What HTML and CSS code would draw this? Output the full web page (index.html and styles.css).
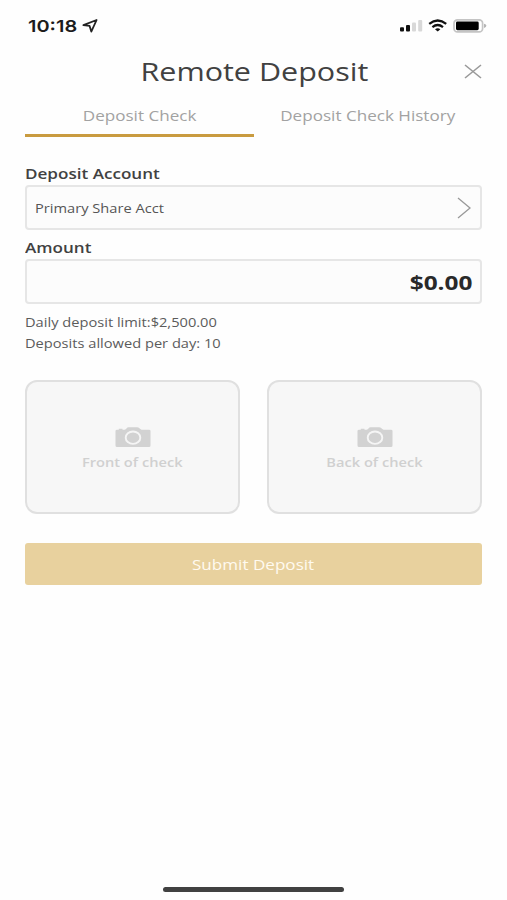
FILE: index.html
```html
<!DOCTYPE html>
<html lang="en">
<head>
<meta charset="utf-8">
<title>Remote Deposit</title>
<link rel="stylesheet" href="styles.css">
</head>
<body>
<div class="screen">
  <header class="status">
    <div class="clock"><span class="wide start time">10:18</span>
      <svg class="locate" width="16" height="14" viewBox="0 0 16 14"><path d="M14.6 1 1.4 6.1 7.6 6.9 9.3 12.6Z" fill="none" stroke="#222" stroke-width="1.8" stroke-linejoin="round"/></svg>
    </div>
    <svg class="indicators" width="88" height="14" viewBox="0 0 88 14">
      <rect x="1" y="8.2" width="4" height="4.4" rx="1" fill="#111"/>
      <rect x="7" y="6" width="4" height="6.6" rx="1" fill="#111"/>
      <rect x="13" y="3.4" width="4" height="9.2" rx="1" fill="#d8d8d8"/>
      <rect x="19.2" y="1" width="4" height="11.6" rx="1" fill="#d8d8d8"/>
      <g fill="none" stroke="#111" stroke-width="2.2">
        <path d="M30.2 4.9Q38.7-1.9 47.2 4.9"/>
        <path d="M33.4 8.1Q38.7 3.9 44 8.1"/>
      </g>
      <path d="M36 10.2Q38.7 8.2 41.4 10.2L38.7 12.6Z" fill="#111"/>
      <rect x="55" y=".9" width="28.6" height="12" rx="3.4" fill="#fff" stroke="#c4c4c4" stroke-width="1.7"/>
      <rect x="57" y="2.6" width="22.7" height="8.6" rx="1.4" fill="#000"/>
      <path d="M85 4.7Q87.4 5.4 87.4 6.8T85 8.9Z" fill="#b5b5b5"/>
    </svg>
  </header>

  <div class="titlebar">
    <h1><span class="wide title">Remote Deposit</span></h1>
    <button class="close" aria-label="Close"><svg width="18" height="15" viewBox="0 0 18 15"><path d="M1 1 17 14M17 1 1 14" stroke="#999" stroke-width="1.6" fill="none"/></svg></button>
  </div>

  <nav class="tabs">
    <a class="tab active"><span class="wide">Deposit Check</span></a>
    <a class="tab"><span class="wide">Deposit Check History</span></a>
  </nav>

  <main>
    <div class="label"><span class="wide start">Deposit Account</span></div>
    <div class="field account"><span class="wide start">Primary Share Acct</span>
      <svg width="14" height="22" viewBox="0 0 14 22"><path d="M1 1 13 11 1 21" fill="none" stroke="#999" stroke-width="1.3"/></svg>
    </div>
    <div class="label second"><span class="wide start">Amount</span></div>
    <div class="field amount"><span class="wide end">$0.00</span></div>
    <div class="limits">
      <p><span class="wide start">Daily deposit limit:$2,500.00</span></p>
      <p><span class="wide start">Deposits allowed per day: 10</span></p>
    </div>
    <div class="photos">
      <div class="photo">
        <svg width="36" height="21" viewBox="0 0 36 21"><path d="M2 2.7H3.8V1.7H7.5V2.7H9.5Q11 2.5 11.7 1.3T14 .3H22Q23.6.3 24.4 1.3T26.5 2.7H34Q35.5 2.7 35.5 4V18.5Q35.5 20 34 20H2Q.5 20 .5 18.5V4Q.5 2.7 2 2.7Z" fill="#d2d2d2"/><ellipse cx="18" cy="10.7" rx="7.3" ry="6.2" fill="#d2d2d2" stroke="#f5f5f5" stroke-width="1.9"/></svg>
        <span class="wide">Front of check</span>
      </div>
      <div class="photo">
        <svg width="36" height="21" viewBox="0 0 36 21"><path d="M2 2.7H3.8V1.7H7.5V2.7H9.5Q11 2.5 11.7 1.3T14 .3H22Q23.6.3 24.4 1.3T26.5 2.7H34Q35.5 2.7 35.5 4V18.5Q35.5 20 34 20H2Q.5 20 .5 18.5V4Q.5 2.7 2 2.7Z" fill="#d2d2d2"/><ellipse cx="18" cy="10.7" rx="7.3" ry="6.2" fill="#d2d2d2" stroke="#f5f5f5" stroke-width="1.9"/></svg>
        <span class="wide">Back of check</span>
      </div>
    </div>
    <button class="submit"><span class="wide">Submit Deposit</span></button>
  </main>
  <div class="home"></div>
</div>
</body>
</html>
```
FILE: styles.css
```css
* { box-sizing: border-box; margin: 0; padding: 0; }
body { background: #fefefe; font-family: "Open Sans", "Noto Sans", sans-serif; color: #414141; }
button { border: 0; background: none; font: inherit; color: inherit; }
svg { display: block; flex: none; }
.screen { width: 507px; height: 900px; display: flex; flex-direction: column; overflow: hidden; }
.wide { display: inline-block; white-space: nowrap; transform: scaleX(1.22); }
.start { transform-origin: left center; }
.end { transform-origin: right center; }

.status { height: 51px; padding: 0 20px 0 28px; display: flex; align-items: center; justify-content: space-between; }
.clock { display: flex; align-items: center; color: #1c1c1c; font: 600 16.5px/20px Inter, sans-serif; }
.time { width: 54px; transform: scaleX(1.21); }

.titlebar { height: 40px; padding: 0 25px; display: grid; grid-template-columns: 18px 1fr 18px; align-items: center; }
h1 { grid-column: 2; text-align: center; font-size: 25px; line-height: 34px; font-weight: 400; }
.title { margin-left: 1px; }
.close { grid-column: 3; width: 18px; height: 15px; }

.tabs { height: 46px; margin: 0 25px; display: grid; grid-template-columns: 1fr 1fr; }
.tab { text-align: center; color: #a2a2a2; font-size: 14px; line-height: 20px; padding-top: 15px; border-bottom: 3px solid transparent; }
.tab.active { border-bottom-color: #c99b40; }

main { padding: 27px 25px 0; }
.label { height: 21px; line-height: 20px; font-size: 14px; font-weight: 600; }
.second { margin-top: 8px; }
.field { height: 45px; border: 2px solid #e6e6e6; border-radius: 4px; background: #fcfcfc; display: flex; align-items: center; justify-content: space-between; padding: 0 9px 0 8px; }
.account { font-size: 12px; color: #555; }
.account .wide { padding-top: 2px; }
.amount { justify-content: flex-end; padding-right: 8px; font-size: 20px; font-weight: 700; color: #292929; }
.amount .wide { padding-top: 1px; }
.limits { margin-top: 8px; font-size: 12px; line-height: 21px; color: #5b5b5b; }
.photos { margin-top: 26px; display: grid; grid-template-columns: 1fr 1fr; gap: 27px; }
.photo { height: 134px; border: 2px solid #e0e0e0; border-radius: 12px; background: #f7f7f7; display: flex; flex-direction: column; align-items: center; padding-top: 45px; font-size: 12px; line-height: 18px; font-weight: 600; color: #d0d0d0; }
.photo svg { margin-bottom: 6px; }
.submit { margin-top: 29px; width: 100%; height: 42px; border-radius: 3px; background: #e8d19e; color: #fffaf0; font-size: 14px; line-height: 20px; display: flex; align-items: center; justify-content: center; padding-top: 2px; }
.home { width: 181px; height: 5px; border-radius: 3px; background: #414141; margin: auto auto 8px 163px; }
```
